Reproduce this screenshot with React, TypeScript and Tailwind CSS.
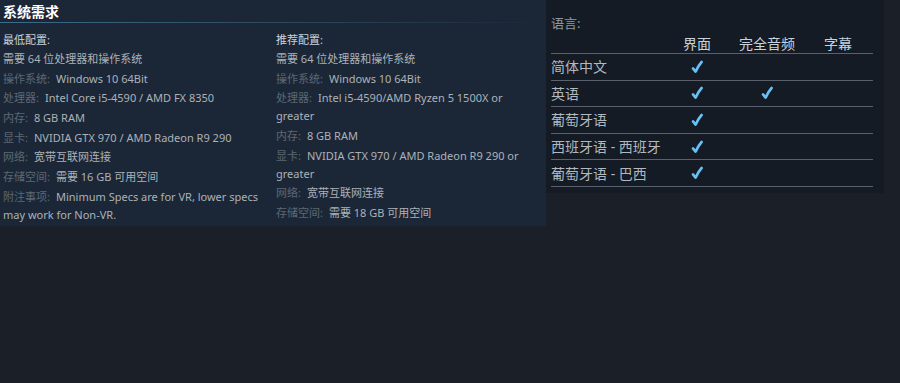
import React from "react";

// 系统需求 + 语言支持 — Steam 商店页片段

const FONT = { fontFamily: '"Noto Sans", "Noto Sans CJK SC", Arial, sans-serif' };

type Spec = { label?: string; value: string };

const MIN_SPECS: Spec[] = [
  { value: "需要 64 位处理器和操作系统" },
  { label: "操作系统:", value: "Windows 10 64Bit" },
  { label: "处理器:", value: "Intel Core i5-4590 / AMD FX 8350" },
  { label: "内存:", value: "8 GB RAM" },
  { label: "显卡:", value: "NVIDIA GTX 970 / AMD Radeon R9 290" },
  { label: "网络:", value: "宽带互联网连接" },
  { label: "存储空间:", value: "需要 16 GB 可用空间" },
  { label: "附注事项:", value: "Minimum Specs are for VR, lower specs may work for Non-VR." },
];

const REC_SPECS: Spec[] = [
  { value: "需要 64 位处理器和操作系统" },
  { label: "操作系统:", value: "Windows 10 64Bit" },
  { label: "处理器:", value: "Intel i5-4590/AMD Ryzen 5 1500X or greater" },
  { label: "内存:", value: "8 GB RAM" },
  { label: "显卡:", value: "NVIDIA GTX 970 / AMD Radeon R9 290 or greater" },
  { label: "网络:", value: "宽带互联网连接" },
  { label: "存储空间:", value: "需要 18 GB 可用空间" },
];

const LANGS: { name: string; ui: boolean; audio: boolean; subs: boolean }[] = [
  { name: "简体中文", ui: true, audio: false, subs: false },
  { name: "英语", ui: true, audio: true, subs: false },
  { name: "葡萄牙语", ui: true, audio: false, subs: false },
  { name: "西班牙语 - 西班牙", ui: true, audio: false, subs: false },
  { name: "葡萄牙语 - 巴西", ui: true, audio: false, subs: false },
];

function Check() {
  return (
    <svg viewBox="0 0 12 14" className="h-[14px] w-[12px]">
      <path
        d="M2 8.4 L4.6 11.6 C6.4 7.6 8.4 4.4 10.6 2"
        fill="none"
        stroke="#67c1f5"
        strokeWidth="2.6"
        strokeLinecap="round"
        strokeLinejoin="round"
      />
    </svg>
  );
}

function SpecColumn({ title, specs, width }: { title: string; specs: Spec[]; width: string }) {
  return (
    <div className={`${width} shrink-0`}>
      <div className="mb-[1px] text-[11px] leading-[18px] text-[#c6d4df]">{title}</div>
      <ul className="flex flex-col gap-[1.7px]">
        {specs.map((s, i) => (
          <li key={i} className="text-[11px] leading-[18px] text-[#acb2b8]">
            {s.label && <span className="mr-[6px] text-[#5e6873]">{s.label}</span>}
            {s.value}
          </li>
        ))}
      </ul>
    </div>
  );
}

export default function App() {
  return (
    <div className="flex h-[383px] w-[900px] items-start bg-[#1a1f28]" style={FONT}>
      {/* ── 系统需求 ── */}
      <div className="h-[226px] w-[546px] shrink-0 bg-[#1b2737]">
        <div className="px-[3px] pt-[2px] text-[14px] font-bold leading-[20px] text-white">系统需求</div>
        <div className="h-[1px] w-full bg-gradient-to-r from-[#3b6e8c] via-[#2c4a60] to-transparent" />
        <div className="flex pl-[3px] pt-[8px]">
          <SpecColumn title="最低配置:" specs={MIN_SPECS} width="w-[273px]" />
          <SpecColumn title="推荐配置:" specs={REC_SPECS} width="w-[262px]" />
        </div>
      </div>

      {/* ── 语言 ── */}
      <div className="h-[193px] w-[338px] shrink-0 bg-[#151b24] pl-[5px] pr-[11px]">
        <div className="pt-[14px] text-[13px] leading-[18px] text-[#8f98a0]">语言:</div>
        <div className="mt-[3px] grid grid-cols-[112px_68px_72px_70px] border-b border-[#5a616c] text-[14px] leading-[18px] text-[#c6d4df]">
          <div />
          <div className="text-center">界面</div>
          <div className="text-center">完全音频</div>
          <div className="text-center">字幕</div>
        </div>
        {LANGS.map((l) => (
          <div
            key={l.name}
            className="grid h-[26.6px] grid-cols-[112px_68px_72px_70px] items-center border-b border-[#5a616c] text-[14px] text-[#b0b8c0]"
          >
            <div className="whitespace-nowrap">{l.name}</div>
            <div className="flex justify-center">{l.ui && <Check />}</div>
            <div className="flex justify-center">{l.audio && <Check />}</div>
            <div className="flex justify-center">{l.subs && <Check />}</div>
          </div>
        ))}
      </div>
    </div>
  );
}
